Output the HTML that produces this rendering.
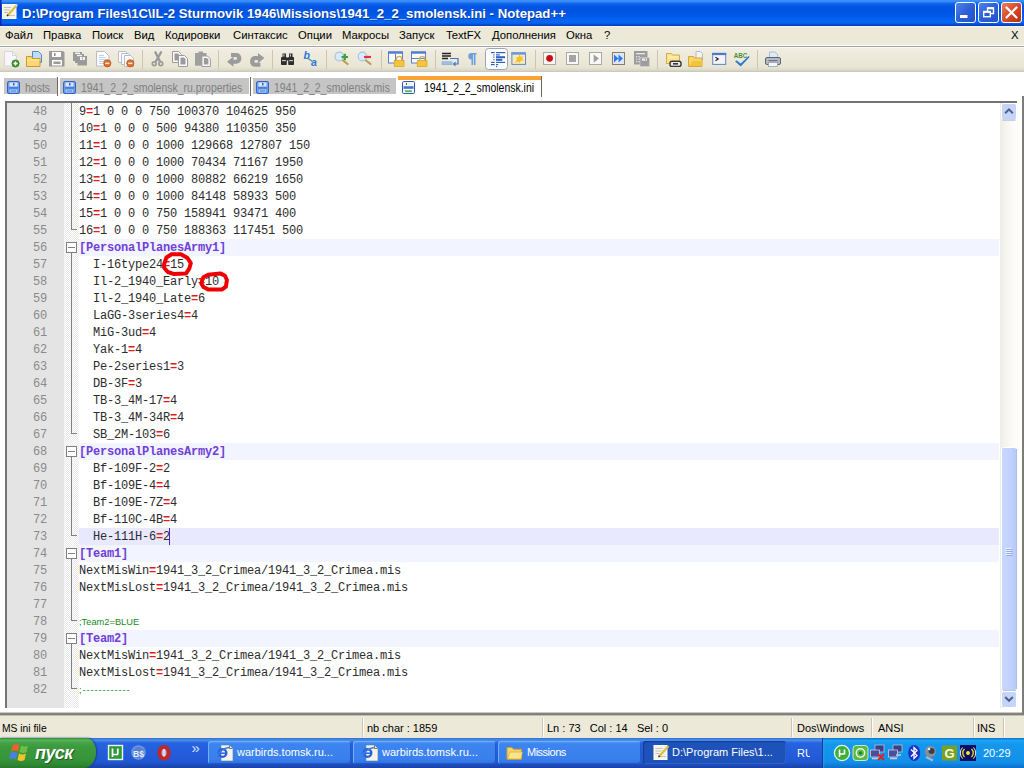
<!DOCTYPE html>
<html><head><meta charset="utf-8"><title>Notepad++</title>
<style>
*{box-sizing:border-box;margin:0;padding:0}
html,body{width:1024px;height:768px;overflow:hidden;background:#fff;font-family:"Liberation Sans",sans-serif}
.abs{position:absolute}
#title{position:absolute;left:0;top:0;width:1024px;height:26px;background:linear-gradient(to bottom,#4092fb 0,#338af8 1.5px,#1467ea 3.5px,#0457e4 6px,#0054e3 12px,#025ceb 17px,#0666f4 21px,#0563ee 23px,#0448cc 25px,#0338a6 26px)}
#title .txt{position:absolute;left:22px;top:6px;color:#fff;font-weight:bold;font-size:13.2px;white-space:nowrap;text-shadow:1px 1px 0 #0a3aa0}
.tb{position:absolute;top:2px;width:21px;height:21px;border:1px solid #fff;border-radius:3px;background:linear-gradient(135deg,#4f83ec 0,#2c5fd8 50%,#2453c8 100%)}
.tb.close{background:linear-gradient(135deg,#e8825c 0,#d8492a 50%,#b8300f 100%)}
#menu{position:absolute;left:0;top:26px;width:1024px;height:19px;background:#ece9d8;border-top:1px solid #f8f6f0}
#menu span{position:absolute;top:2px;font-size:11.3px;color:#000;white-space:nowrap}
#sep1{position:absolute;left:0;top:45px;width:1024px;height:1px;background:#fff}
#sep2{position:absolute;left:0;top:46px;width:1024px;height:1px;background:#a6a6a0}
#tool{position:absolute;left:0;top:47px;width:1024px;height:25px;background:linear-gradient(to bottom,#fdfdfb 0,#f1eee4 1.5px,#eeebde 6px,#ece9d9 13px,#e8e5d3 20px,#dcdacb 23px,#c6c5b9 25px)}
.ic{position:absolute;top:4px;width:16px;height:16px}
.vs{position:absolute;top:3px;width:1px;height:19px;background:#c5c2b2}
#tabs{position:absolute;left:0;top:72px;width:1024px;height:29px;background:#fff}
.tab{position:absolute;top:6px;height:16px;background:#c5c5c5;font-size:12px;color:#808080;white-space:nowrap}
.tab span{position:absolute;top:3px;line-height:14px;transform:scaleX(0.873);transform-origin:0 0}
.tab.act{background:#fff;color:#000;top:8px}
.tsep{position:absolute;top:5px;width:1px;height:19px;background:#6e6a5a}
#edb{position:absolute;left:5px;top:101px;width:1012px;height:607px;border-top:2px solid #747474;border-left:2px solid #747474;background:#fff}
#edbot{position:absolute;left:0;top:712px;width:1024px;height:4px;background:linear-gradient(to bottom,#f4f3ee 0,#8e8e88 30%,#6e6e6a 55%,#a8a69a 80%,#ece9d8 100%)}
.ln{position:absolute;left:7px;width:40px;height:17px;line-height:17px;text-align:right;font-family:"Liberation Mono",monospace;font-size:12px;letter-spacing:-0.2px;color:#8a8a8a;white-space:pre}
.tx{position:absolute;left:79px;height:17px;line-height:17px;font-family:"Liberation Mono",monospace;font-size:12px;letter-spacing:-0.2px;color:#2c2c2c;white-space:pre}
.tx .eq{color:#e41a1a;font-weight:bold}
.tx.sec{color:#7040d8;font-weight:bold}
.tx.com{color:#1a8a1a;font-family:"Liberation Sans",sans-serif;font-size:9.3px;letter-spacing:0}
.tx.com.d{letter-spacing:0.9px}
#status{position:absolute;left:0;top:716px;width:1024px;height:22px;background:#ece9d8;font-size:11px}
#status span{position:absolute;top:6px;white-space:nowrap}
#status i{position:absolute;top:2px;width:2px;height:19px;border-left:1px solid #c8c5b6;border-right:1px solid #fff}
#task{position:absolute;left:0;top:738px;width:1024px;height:30px;background:linear-gradient(to bottom,#3168d5 0,#4993e6 2px,#2663e0 5px,#245ddb 14px,#2157d2 24px,#1941a5 30px)}
.tbtn{position:absolute;top:3px;width:143px;height:23px;border-radius:3px;background:linear-gradient(to bottom,#5a9af5 0,#3d84f0 3px,#3a80ec 18px,#2f6fe0 23px);box-shadow:inset 1px 1px 0 #6fb0fa,inset -1px -1px 0 #2458c8;color:#fff;font-size:11px;white-space:nowrap}
.tbtn span{position:absolute;left:29px;top:5px}
.tbtn.on{background:#1e52b8;box-shadow:inset 1px 1px 1px #143a90,inset -1px -1px 0 #2d63c8}
</style></head><body>
<div id="title"><div class="txt">D:\Program Files\1C\IL-2 Sturmovik 1946\Missions\1941_2_2_smolensk.ini - Notepad++</div>
<div class="tb" style="left:955px"></div><div class="tb" style="left:978px"></div><div class="tb close" style="left:1001px"></div><svg class="abs" style="left:0;top:0" width="1024" height="26" viewBox="0 0 1024 26">
<rect x="0" y="0" width="1.500" height="26" fill="#0a28b8"/>
<rect x="2.500" y="4.500" width="13.500" height="14" fill="#f4f2ea" stroke="#fdfdf8"/>
<path d="M4 7.500h7M4 10h6M4 12.500h4M9 15.500h6" stroke="#c9c4b0" stroke-width="1"/>
<path d="M7.500 15.500L16.500 5.500" stroke="#d8c040" stroke-width="2.200"/><path d="M7 16l1.200-1.200" stroke="#333" stroke-width="1.600"/><path d="M15.800 6l1.500-1.500" stroke="#d0d0d8" stroke-width="2"/>
<rect x="960" y="15" width="7.500" height="3" fill="#fff"/>
<path d="M987.500 11v-3h6v5.500h-3" fill="none" stroke="#fff" stroke-width="1.400"/><path d="M987.200 8.300h6.600" stroke="#fff" stroke-width="2"/>
<rect x="983.700" y="11.700" width="6.600" height="5" fill="none" stroke="#fff" stroke-width="1.400"/><path d="M983.200 11.800h7.600" stroke="#fff" stroke-width="2"/>
<path d="M1006.500 7.500l10 10M1016.500 7.500l-10 10" stroke="#fff" stroke-width="2.200" stroke-linecap="round"/>
</svg>
</div>
<div id="menu"><span style="left:5px">Файл</span><span style="left:43px">Правка</span><span style="left:92px">Поиск</span><span style="left:134px">Вид</span><span style="left:165px">Кодировки</span><span style="left:233px">Синтаксис</span><span style="left:298px">Опции</span><span style="left:342px">Макросы</span><span style="left:399px">Запуск</span><span style="left:446px">TextFX</span><span style="left:492px">Дополнения</span><span style="left:566px">Окна</span><span style="left:604px">?</span><span style="left:1011px">X</span></div>
<div id="sep1"></div><div id="sep2"></div>
<div id="tool"><svg class="abs" style="left:0;top:0" width="1024" height="25" viewBox="0 47 1024 25">
<!-- separators -->
<g fill="#c9c6b6"><rect x="142" y="50" width="1" height="19"/><rect x="218" y="50" width="1" height="19"/><rect x="272" y="50" width="1" height="19"/><rect x="326" y="50" width="1" height="19"/><rect x="381" y="50" width="1" height="19"/><rect x="435" y="50" width="1" height="19"/><rect x="535" y="50" width="1" height="19"/><rect x="657" y="50" width="1" height="19"/><rect x="757" y="50" width="1" height="19"/></g>
<!-- 1 new -->
<path d="M4.5 51.5h8l4 4v10.5h-12z" fill="#f7f7f9" stroke="#d4d4dc"/><path d="M12.5 51.5v4h4" fill="none" stroke="#d4d4dc"/>
<circle cx="15.5" cy="63.5" r="3.6" fill="#3f9a2c" stroke="#2f7a22" stroke-width="0.8"/><path d="M13.5 63.5h4M15.5 61.5v4" stroke="#fff" stroke-width="1.4"/>
<!-- 2 open -->
<path d="M32.5 51.5h6l3 3v8h-9z" fill="#bcdcf8" stroke="#5a86c0"/>
<path d="M26.5 56.5h5l1 2h7.5v8h-13.5z" fill="#fbd873" stroke="#c79a2e"/><path d="M27 60h12.5" stroke="#fdeaa8" stroke-width="1"/>
<!-- 3 save (disabled) -->
<path d="M49 51h14l1.5 1.5v14h-15.5z" fill="#9a9a9a"/><rect x="52" y="52" width="9" height="5" fill="#fdfdfd"/><rect x="54" y="53" width="1.5" height="3" fill="#8a8a8a"/><rect x="52" y="60" width="10" height="5.5" fill="#fdfdfd"/><rect x="53.5" y="61.5" width="7" height="2.5" fill="#9a9a9a"/>
<!-- 4 save all (disabled) -->
<g fill="#9a9a9a"><rect x="73" y="52" width="9" height="9"/><rect x="75" y="54" width="9" height="9"/><rect x="77.5" y="56" width="9.5" height="9.5"/></g><rect x="75" y="52.6" width="5" height="1.4" fill="#f4f4f4"/><rect x="77" y="54.8" width="5" height="1.4" fill="#f4f4f4"/><rect x="80" y="57" width="5" height="3" fill="#f4f4f4"/><rect x="82" y="57.5" width="1" height="2" fill="#9a9a9a"/>
<!-- 5 close -->
<path d="M96.5 51.5h8l4.5 4.5v10h-12.5z" fill="#fdfdfe" stroke="#b9bcc8"/><path d="M99 55.500h5M99 57.500h7M99 59.500h7M99 61.500h5M99 63.500h4" stroke="#a8c0e0" stroke-width="0.700"/>
<circle cx="107.3" cy="63.3" r="3.6" fill="#e0702a" stroke="#b8561c" stroke-width="0.8"/><rect x="105.2" y="62.6" width="4.2" height="1.5" fill="#ffe9d8"/>
<!-- 6 close all -->
<path d="M118.500 51.500h7l2 2v9h-9z" fill="#fdfdfe" stroke="#b9bcc8"/><path d="M121.500 53.500h7l2 2v9h-9z" fill="#fdfdfe" stroke="#b9bcc8"/><path d="M124.500 55.500h6l3 3v8h-9z" fill="#fdfdfe" stroke="#b9bcc8"/>
<circle cx="130.300" cy="63.300" r="3.600" fill="#e0702a" stroke="#b8561c" stroke-width="0.800"/><rect x="128.200" y="62.600" width="4.200" height="1.500" fill="#ffe9d8"/>
<!-- 7 cut -->
<g stroke="#9b9b9b" fill="none"><path d="M155 51.500L160.300 62M161.500 51.500L155.500 62" stroke-width="2.400"/><circle cx="154.200" cy="63.800" r="1.900" stroke-width="1.700"/><circle cx="160.800" cy="63.800" r="1.900" stroke-width="1.700"/></g>
<!-- 8 copy -->
<path d="M172.500 51.500h6l3 3v8h-9z" fill="#fafafa" stroke="#9b9b9b"/><path d="M174.500 53.500h3.500l1.500 1.500v5.500h-5z" fill="#9b9b9b"/>
<path d="M178.500 55.500h6l3 3v8h-9z" fill="#fafafa" stroke="#9b9b9b"/><path d="M180.500 57.500h3.500l1.500 1.500v5.500h-5z" fill="#9b9b9b"/>
<!-- 9 paste -->
<path d="M195 53h3.500v-1.500h4.500v1.500h3.500v12.800h-11.500z" fill="#9f9f9f"/>
<path d="M201.900 56h5.500l3 3v7.500h-8.500z" fill="#fafafa" stroke="#9b9b9b"/><path d="M203.900 58h3l1.500 1.500v5h-4.500z" fill="#9b9b9b"/>
<!-- 10 undo -->
<path id="undo" d="M231 53H236.500A4.800 4.800 0 0 1 241.300 57.800V58.900A4.800 4.800 0 0 1 236.500 63.700H233.500V66.800L227 61.700L233.500 56.600V59.700H236A1 1 0 0 0 237 58.700V58A1 1 0 0 0 236 57H231Z" fill="#9b9b9b"/>
<!-- 11 redo -->
<use href="#undo" transform="translate(491.400,119.800) scale(-1,-1)"/>
<!-- 12 find -->
<g fill="#2e2e2e"><rect x="281" y="57" width="5.800" height="8" rx="0.800"/><rect x="288.200" y="57" width="5.800" height="8" rx="0.800"/><rect x="282.500" y="53.500" width="3.500" height="4"/><rect x="289" y="53.500" width="3.500" height="4"/><rect x="286" y="57.500" width="3" height="3"/></g><g fill="#c8c8c8"><rect x="282" y="60" width="3.800" height="1.200"/><rect x="289.200" y="60" width="3.800" height="1.200"/><rect x="283.300" y="54.300" width="1.200" height="2.200"/><rect x="289.800" y="54.300" width="1.200" height="2.200"/></g>
<!-- 13 replace -->
<text x="303.500" y="58.500" font-family="Liberation Sans,sans-serif" font-size="10.500" font-weight="bold" font-style="italic" fill="#2f74d8">b</text><text x="311" y="66" font-family="Liberation Sans,sans-serif" font-size="10.500" font-weight="bold" font-style="italic" fill="#2f74d8">a</text><path d="M307.500 58l5 3.500" stroke="#3aa0a8" stroke-width="1.400"/>
<!-- 14 zoom in -->
<path d="M343 60.500l4.500 3.500" stroke="#c09a50" stroke-width="2.200" stroke-linecap="round"/><circle cx="339.300" cy="56.500" r="4.300" fill="#dbeaf8" stroke="#a8c4e4" stroke-width="1.200"/><path d="M341.500 57h6.500M344.800 53.800v6.400" stroke="#3f9f3a" stroke-width="2.200"/>
<!-- 15 zoom out -->
<path d="M366 60.500l4.500 3.500" stroke="#c09a50" stroke-width="2.200" stroke-linecap="round"/><circle cx="362.500" cy="56.500" r="4.300" fill="#dbeaf8" stroke="#a8c4e4" stroke-width="1.200"/><path d="M364 57h7" stroke="#e0304a" stroke-width="2.200"/>
<!-- 16 sync v -->
<rect x="388.500" y="52" width="14" height="11" fill="#fbfcff" stroke="#5a80c8"/><rect x="388" y="51.500" width="15" height="2.200" fill="#4f7bd0"/><path d="M395.500 54v9" stroke="#5a80c8"/>
<path d="M396.500 60.500v-1.500a2.600 2.600 0 0 1 5.200 0v1.500" fill="none" stroke="#d8b050" stroke-width="1.400"/><rect x="394.200" y="60.300" width="9.800" height="6.300" fill="#f6c53c" stroke="#d09a20" stroke-width="0.600"/>
<!-- 17 sync h -->
<rect x="411.500" y="52" width="14" height="11" fill="#fbfcff" stroke="#5a80c8"/><rect x="411" y="51.500" width="15" height="2.200" fill="#4f7bd0"/><path d="M412 58.500h13" stroke="#5a80c8"/>
<path d="M419.500 60.500v-1.500a2.600 2.600 0 0 1 5.200 0v1.500" fill="none" stroke="#d8b050" stroke-width="1.400"/><rect x="417.200" y="60.300" width="9.800" height="6.300" fill="#f6c53c" stroke="#d09a20" stroke-width="0.600"/>
<!-- 18 wrap -->
<path d="M442 53.500h9M442 56h9M442 58.500h6" stroke="#222" stroke-width="1.300"/><rect x="442" y="61.800" width="10" height="3" fill="#9dbdea" stroke="#7aa0d8" stroke-width="0.500"/><path d="M450 58.500h8v5.500h-4" fill="none" stroke="#3f74c8" stroke-width="1.200"/><path d="M455.500 61.500l-2.800 2.500l2.800 2.500z" fill="#3f74c8"/>
<!-- 19 pilcrow -->
<path d="M471.500 65v-12h5v1.400h-1v10.600h-1.600v-10.600h-0.800v10.600z" fill="#6a9fe0"/><path d="M472.500 53h-1a3.200 3.200 0 0 0 0 6.400h1z" fill="#6a9fe0"/>
<!-- 20 indent guide (pressed) -->
<rect x="485.500" y="48.500" width="22" height="21" rx="3" fill="#fdfdfd" stroke="#98a6bc"/>
<g fill="#2f5fc0"><rect x="491" y="52" width="3.700" height="1.200"/><rect x="496" y="52" width="9.300" height="1.200"/><rect x="493.300" y="54.300" width="1.200" height="1.200"/><rect x="496" y="54.300" width="3.800" height="1.200"/><rect x="493.300" y="56.500" width="1.200" height="1.200"/><rect x="496" y="56.200" width="9" height="2"/><rect x="493.300" y="59" width="1.200" height="1.200"/><rect x="496" y="58.800" width="6.300" height="2"/><rect x="491" y="61.800" width="3.700" height="1.200"/><rect x="496" y="61.800" width="9" height="1.200"/><rect x="491" y="64" width="3.700" height="1.200"/><rect x="496" y="64" width="2.200" height="1.200"/><rect x="496" y="66" width="1.200" height="1.200"/></g>
<!-- 21 user lang -->
<rect x="511.900" y="52.800" width="13.600" height="11.600" fill="#f6ecc0" stroke="#5f88c8"/><rect x="511.400" y="52.300" width="14.600" height="2.400" fill="#6a9ae6"/><path d="M515 63l2-4.500l-2-1l3.500-0.500l1-3l1.500 3l3-1l-2 2.500l2 2l-3 0.300l-1.500 2.200l-1.500-1.500z" fill="#f5c030"/>
<!-- 22 rec -->
<rect x="543.500" y="52.500" width="12" height="12" fill="#f8f8f6" stroke="#a8a8a4"/><circle cx="549.600" cy="58.300" r="3.400" fill="#cc0a10"/>
<!-- 23 stop -->
<rect x="566.500" y="52.500" width="12" height="12" fill="#f8f8f6" stroke="#a8a8a4"/><rect x="569" y="55" width="7" height="7" fill="#a4a4a4"/>
<!-- 24 play -->
<rect x="589.500" y="52.500" width="12" height="12" fill="#f8f8f6" stroke="#a8a8a4"/><path d="M593.700 54.400l5.300 4.200l-5.300 4.200z" fill="#a0a0a0"/>
<!-- 25 ff -->
<rect x="612.500" y="52.500" width="12" height="12" fill="#dce8fa" stroke="#8a7c70"/><path d="M614 54.500l4.500 4l-4.500 4zM618.500 54.500l4.500 4l-4.500 4z" fill="#3478e4"/>
<!-- 26 save macro (disabled) -->
<rect x="634" y="51" width="13.500" height="13.500" fill="#9c9c9c"/><rect x="636" y="53" width="9" height="1.300" fill="#e8e8e8"/><g fill="#e8e8e8"><rect x="636" y="56" width="1.300" height="1.300"/><rect x="638.500" y="56" width="1.300" height="1.300"/><rect x="636" y="58.500" width="1.300" height="1.300"/><rect x="638.500" y="58.500" width="1.300" height="1.300"/><rect x="636" y="61" width="1.300" height="1.300"/><rect x="638.500" y="61" width="1.300" height="1.300"/></g><rect x="640" y="57.600" width="9.600" height="9" fill="#9c9c9c" stroke="#e4e4e4" stroke-width="0.500"/><rect x="642" y="58.400" width="5" height="2.300" fill="#eeeeee"/><rect x="645" y="58.600" width="1" height="1.600" fill="#9c9c9c"/>
<!-- 27 folder chain -->
<path d="M666.500 53.500h5l1 1.500h7v8.500h-13z" fill="#fbe394" stroke="#d2ac48"/><path d="M668 57h10" stroke="#fff2c0"/><rect x="670" y="61.200" width="11" height="5.200" rx="2" fill="#e8e8e8" stroke="#383838" stroke-width="1.400"/><rect x="673" y="63" width="5" height="1.600" fill="#383838"/>
<!-- 28 folder page -->
<path d="M696 51.500h4.500l2 2v6.500h-6.500z" fill="#f2f2f4" stroke="#b8b8c0"/><path d="M688.500 56.500h5l1 1.500h7.500v8.500h-13.500z" fill="#f9d468" stroke="#d2a838"/><path d="M689 66l4-5h9v5z" fill="#f5c23c"/>
<!-- 29 cmd -->
<rect x="712.700" y="53.400" width="13" height="11" fill="#f3f3fa" stroke="#6484c4"/><rect x="712.200" y="52.900" width="14" height="2.200" fill="#4f78c8"/><path d="M715.500 57.200l2.800 1.800l-2.800 1.800" fill="none" stroke="#222" stroke-width="1.100"/>
<!-- 30 ABC -->
<text x="733.800" y="57.800" font-family="Liberation Sans,sans-serif" font-size="6.400" font-weight="bold" fill="#4d8c34" textLength="13.500" lengthAdjust="spacingAndGlyphs">ABC</text><path d="M736.400 60.300l4.300 3.200l8-7.500l1 1l-9 9.500l-5.500-5z" fill="#2a7bd4"/>
<!-- 31 print -->
<path d="M769.500 58v-6h5.500l2.500 2.500v3.500z" fill="#dcebfb" stroke="#9ab4d8" stroke-width="0.800"/><rect x="765.500" y="57.500" width="15" height="7" rx="1.500" fill="#b4bac2" stroke="#5e646e"/><rect x="768.500" y="60" width="9" height="1.200" fill="#70767e"/><rect x="768.500" y="62.500" width="9" height="4" fill="#f4f8fc" stroke="#8a98b0" stroke-width="0.700"/>
<!--MORE-->
</svg>
</div>
<div id="tabs"><svg width="0" height="0" style="position:absolute"><defs>
<g id="flop"><rect x="0.5" y="0.5" width="12" height="12" rx="1.5" fill="#6f9eec" stroke="#3565c4"/><rect x="2.5" y="1.5" width="8" height="4" fill="#d9e6fb"/><rect x="6" y="2" width="1.5" height="2.5" fill="#2f62c4"/><rect x="2" y="6.2" width="9" height="1.4" fill="#3f74d6"/><rect x="3" y="8.5" width="7" height="3" fill="#a9c6f5"/><rect x="4" y="9.5" width="5" height="1" fill="#4a86c8"/></g>
<g id="flopw"><rect x="0.5" y="0.5" width="12" height="12" rx="1.2" fill="#f6f9fe" stroke="#2f5aa8"/><rect x="4" y="2" width="1" height="2" fill="#3a6a3a"/><rect x="5.500" y="2" width="3" height="2" fill="#e4f0d8"/><rect x="1.500" y="5.200" width="10" height="2.600" fill="#4a72d8"/><rect x="3" y="9.300" width="7" height="1.800" fill="#5fb84a"/></g>
</defs></svg>
<div class="tab" style="left:4px;width:53px"><svg class="abs" style="left:3px;top:3px" width="13" height="13"><use href="#flop"/></svg><span style="left:21px">hosts</span></div>
<div class="tsep" style="left:57px"></div>
<div class="tab" style="left:60px;width:189px"><svg class="abs" style="left:3px;top:3px" width="13" height="13"><use href="#flop"/></svg><span style="left:21px">1941_2_2_smolensk_ru.properties</span></div>
<div class="tsep" style="left:250px"></div>
<div class="tab" style="left:253px;width:143px"><svg class="abs" style="left:3px;top:3px" width="13" height="13"><use href="#flop"/></svg><span style="left:21px">1941_2_2_smolensk.mis</span></div>
<div class="abs" style="left:398px;top:4px;width:143px;height:4px;background:#faa334"></div>
<div class="tab act" style="left:398px;width:143px"><svg class="abs" style="left:4px;top:1px" width="13" height="13"><use href="#flopw"/></svg><span style="left:26px;top:1px">1941_2_2_smolensk.ini</span></div>
<div class="tsep" style="left:541px;top:4px;height:21px"></div>
</div>
<div id="edb"></div><div id="edbot"></div>
<div class="abs" style="left:7px;top:103px;width:57px;height:605px;background:#e4e4e4"></div>
<div class="abs" style="left:64px;top:103px;width:15px;height:605px;background:repeating-conic-gradient(#fff 0 25%,#e9e9e9 0 50%) 0 0/2px 2px"></div>
<div class="ln" style="top:104px">48</div>
<div class="tx" style="top:104px">9<b class="eq">=</b>1 0 0 0 750 100370 104625 950</div>
<div class="ln" style="top:121px">49</div>
<div class="tx" style="top:121px">10<b class="eq">=</b>1 0 0 0 500 94380 110350 350</div>
<div class="ln" style="top:138px">50</div>
<div class="tx" style="top:138px">11<b class="eq">=</b>1 0 0 0 1000 129668 127807 150</div>
<div class="ln" style="top:155px">51</div>
<div class="tx" style="top:155px">12<b class="eq">=</b>1 0 0 0 1000 70434 71167 1950</div>
<div class="ln" style="top:172px">52</div>
<div class="tx" style="top:172px">13<b class="eq">=</b>1 0 0 0 1000 80882 66219 1650</div>
<div class="ln" style="top:189px">53</div>
<div class="tx" style="top:189px">14<b class="eq">=</b>1 0 0 0 1000 84148 58933 500</div>
<div class="ln" style="top:206px">54</div>
<div class="tx" style="top:206px">15<b class="eq">=</b>1 0 0 0 750 158941 93471 400</div>
<div class="ln" style="top:223px">55</div>
<div class="tx" style="top:223px">16<b class="eq">=</b>1 0 0 0 750 188363 117451 500</div>
<div class="abs" style="left:79px;top:239px;width:920px;height:17px;background:#f2f4ff"></div>
<div class="ln" style="top:240px">56</div>
<div class="tx sec" style="top:240px">[PersonalPlanesArmy1]</div>
<div class="ln" style="top:257px">57</div>
<div class="tx" style="top:257px">&nbsp;&nbsp;I-16type24<b class="eq">=</b>15</div>
<div class="ln" style="top:274px">58</div>
<div class="tx" style="top:274px">&nbsp;&nbsp;Il-2_1940_Early<b class="eq">=</b>10</div>
<div class="ln" style="top:291px">59</div>
<div class="tx" style="top:291px">&nbsp;&nbsp;Il-2_1940_Late<b class="eq">=</b>6</div>
<div class="ln" style="top:308px">60</div>
<div class="tx" style="top:308px">&nbsp;&nbsp;LaGG-3series4<b class="eq">=</b>4</div>
<div class="ln" style="top:325px">61</div>
<div class="tx" style="top:325px">&nbsp;&nbsp;MiG-3ud<b class="eq">=</b>4</div>
<div class="ln" style="top:342px">62</div>
<div class="tx" style="top:342px">&nbsp;&nbsp;Yak-1<b class="eq">=</b>4</div>
<div class="ln" style="top:359px">63</div>
<div class="tx" style="top:359px">&nbsp;&nbsp;Pe-2series1<b class="eq">=</b>3</div>
<div class="ln" style="top:376px">64</div>
<div class="tx" style="top:376px">&nbsp;&nbsp;DB-3F<b class="eq">=</b>3</div>
<div class="ln" style="top:393px">65</div>
<div class="tx" style="top:393px">&nbsp;&nbsp;TB-3_4M-17<b class="eq">=</b>4</div>
<div class="ln" style="top:410px">66</div>
<div class="tx" style="top:410px">&nbsp;&nbsp;TB-3_4M-34R<b class="eq">=</b>4</div>
<div class="ln" style="top:427px">67</div>
<div class="tx" style="top:427px">&nbsp;&nbsp;SB_2M-103<b class="eq">=</b>6</div>
<div class="abs" style="left:79px;top:443px;width:920px;height:17px;background:#f2f4ff"></div>
<div class="ln" style="top:444px">68</div>
<div class="tx sec" style="top:444px">[PersonalPlanesArmy2]</div>
<div class="ln" style="top:461px">69</div>
<div class="tx" style="top:461px">&nbsp;&nbsp;Bf-109F-2<b class="eq">=</b>2</div>
<div class="ln" style="top:478px">70</div>
<div class="tx" style="top:478px">&nbsp;&nbsp;Bf-109E-4<b class="eq">=</b>4</div>
<div class="ln" style="top:495px">71</div>
<div class="tx" style="top:495px">&nbsp;&nbsp;Bf-109E-7Z<b class="eq">=</b>4</div>
<div class="ln" style="top:512px">72</div>
<div class="tx" style="top:512px">&nbsp;&nbsp;Bf-110C-4B<b class="eq">=</b>4</div>
<div class="abs" style="left:79px;top:528px;width:920px;height:17px;background:#e8e8ff"></div>
<div class="ln" style="top:529px">73</div>
<div class="tx" style="top:529px">&nbsp;&nbsp;He-111H-6<b class="eq">=</b>2</div>
<div class="abs" style="left:79px;top:545px;width:920px;height:17px;background:#f2f4ff"></div>
<div class="ln" style="top:546px">74</div>
<div class="tx sec" style="top:546px">[Team1]</div>
<div class="ln" style="top:563px">75</div>
<div class="tx" style="top:563px">NextMisWin<b class="eq">=</b>1941_3_2_Crimea/1941_3_2_Crimea.mis</div>
<div class="ln" style="top:580px">76</div>
<div class="tx" style="top:580px">NextMisLost<b class="eq">=</b>1941_3_2_Crimea/1941_3_2_Crimea.mis</div>
<div class="ln" style="top:597px">77</div>
<div class="tx" style="top:597px"></div>
<div class="ln" style="top:614px">78</div>
<div class="tx com" style="top:614px">;Team2=BLUE</div>
<div class="abs" style="left:79px;top:630px;width:920px;height:17px;background:#f2f4ff"></div>
<div class="ln" style="top:631px">79</div>
<div class="tx sec" style="top:631px">[Team2]</div>
<div class="ln" style="top:648px">80</div>
<div class="tx" style="top:648px">NextMisWin<b class="eq">=</b>1941_3_2_Crimea/1941_3_2_Crimea.mis</div>
<div class="ln" style="top:665px">81</div>
<div class="tx" style="top:665px">NextMisLost<b class="eq">=</b>1941_3_2_Crimea/1941_3_2_Crimea.mis</div>
<div class="ln" style="top:682px">82</div>
<div class="tx com d" style="top:682px">;------------</div>
<div class="abs" style="left:71px;top:103px;width:1px;height:127px;background:#808080"></div>
<div class="abs" style="left:71px;top:229px;width:6px;height:1px;background:#808080"></div>
<div class="abs" style="left:71px;top:253px;width:1px;height:181px;background:#808080"></div>
<div class="abs" style="left:71px;top:433px;width:6px;height:1px;background:#808080"></div>
<div class="abs" style="left:66px;top:242px;width:11px;height:11px;border:1px solid #808080;background:#fff"></div><div class="abs" style="left:68px;top:247px;width:7px;height:1px;background:#808080"></div>
<div class="abs" style="left:71px;top:457px;width:1px;height:79px;background:#808080"></div>
<div class="abs" style="left:71px;top:535px;width:6px;height:1px;background:#808080"></div>
<div class="abs" style="left:66px;top:446px;width:11px;height:11px;border:1px solid #808080;background:#fff"></div><div class="abs" style="left:68px;top:451px;width:7px;height:1px;background:#808080"></div>
<div class="abs" style="left:71px;top:559px;width:1px;height:62px;background:#808080"></div>
<div class="abs" style="left:71px;top:620px;width:6px;height:1px;background:#808080"></div>
<div class="abs" style="left:66px;top:548px;width:11px;height:11px;border:1px solid #808080;background:#fff"></div><div class="abs" style="left:68px;top:553px;width:7px;height:1px;background:#808080"></div>
<div class="abs" style="left:71px;top:644px;width:1px;height:45px;background:#808080"></div>
<div class="abs" style="left:71px;top:688px;width:6px;height:1px;background:#808080"></div>
<div class="abs" style="left:66px;top:633px;width:11px;height:11px;border:1px solid #808080;background:#fff"></div><div class="abs" style="left:68px;top:638px;width:7px;height:1px;background:#808080"></div>
<div class="abs" style="left:169px;top:528px;width:1px;height:17px;background:#5a20d0"></div>
<svg class="abs" style="left:0;top:0" width="1024" height="768" viewBox="0 0 1024 768"><g fill="none" stroke="#ee0000" stroke-width="4" stroke-linejoin="round" stroke-linecap="round">
<path d="M164.1 264.1 L166.4 257.5 L171.6 254.2 L180.9 254.2 L187.5 258 L190.8 263.1 L189.4 268.3 L186.1 273.4 L173.4 273.9 L167.8 272 L164.1 267.8 Z"/>
<path d="M202 280.9 L203.4 277.2 L208.1 274.8 L220.3 273.4 L225 275.8 L226.9 280 L225.9 286.6 L222.2 289.4 L208.1 289.4 L203.4 287 L201.5 283.7 Z"/>
</g></svg>
<svg class="abs" style="left:0;top:0" width="1024" height="768" viewBox="0 0 1024 768">
<defs><linearGradient id="trk" x1="0" y1="0" x2="1" y2="0"><stop offset="0" stop-color="#eeede5"/><stop offset="0.5" stop-color="#f8f7f3"/><stop offset="1" stop-color="#fefefc"/></linearGradient>
<linearGradient id="thm" x1="0" y1="0" x2="1" y2="0"><stop offset="0" stop-color="#c9d7fd"/><stop offset="0.6" stop-color="#c1d2fd"/><stop offset="1" stop-color="#b6c8f4"/></linearGradient></defs>
<rect x="1000" y="103" width="17" height="605" fill="url(#trk)"/>
<rect x="1001.5" y="103.500" width="15" height="16" rx="2" fill="#c5d5fa" stroke="#fff"/><path d="M1002.500 120h13" stroke="#98a8c8" stroke-width="1"/>
<path d="M1005.200 113.200l3.800-3.800l3.800 3.800" fill="none" stroke="#4d6185" stroke-width="2"/>
<rect x="1001.500" y="447.500" width="15" height="243" rx="2" fill="url(#thm)" stroke="#fff"/><path d="M1016.500 449v240" stroke="#98aee0" stroke-width="0.800"/><path d="M1003 690.700h13" stroke="#8fa4d4" stroke-width="0.800"/>
<path d="M1005.500 548.500h6M1005.500 550.500h6M1005.500 552.500h6M1005.500 554.500h6" stroke="#eef4fe" stroke-width="1"/><path d="M1006.500 549.500h6M1006.500 551.500h6M1006.500 553.500h6M1006.500 555.500h6" stroke="#8ca8e8" stroke-width="1"/>
<rect x="1001.500" y="691.500" width="15" height="16" rx="2" fill="#c5d5fa" stroke="#fff"/>
<path d="M1005.200 697l3.800 3.800l3.800-3.800" fill="none" stroke="#4d6185" stroke-width="2"/>
<rect x="1022" y="96" width="2" height="619" fill="#7c7c78"/>
</svg>
<div id="status"><span style="left:2px;font-size:10.3px;top:7px">MS ini file</span><span style="left:367px">nb char : 1859</span><span style="left:547px">Ln : 73&nbsp;&nbsp;&nbsp;Col : 14&nbsp;&nbsp;&nbsp;Sel : 0</span><span style="left:797px">Dos\Windows</span><span style="left:878px">ANSI</span><span style="left:977px">INS</span><i style="left:362px"></i><i style="left:542px"></i><i style="left:791px"></i><i style="left:871px"></i><i style="left:973px"></i><i style="left:1003px"></i></div>
<div id="task"><div class="abs" style="left:0;top:0;width:96px;height:30px;border-radius:0 10px 12px 0/0 14px 16px 0;background:linear-gradient(to bottom,#2f8a33 0,#58b45a 2px,#43a346 5px,#3a9a3d 9px,#37963a 20px,#2f8a33 26px,#27782b 30px);box-shadow:1px 0 2px #163f8c"></div>
<div class="abs" style="left:35px;top:5px;color:#fff;font-weight:bold;font-style:italic;font-size:18px;line-height:20px;letter-spacing:-0.6px;text-shadow:1px 1px 1px #1c5a20">пуск</div>
<svg class="abs" style="left:0;top:0" width="1024" height="30" viewBox="0 738 1024 30">
<!-- flag -->
<path d="M12.500 745q3.500-2 7 0l-1.500 6.500q-3.500-2-7 0z" fill="#e8622c"/><path d="M21 745.500q3.500 2 7 0l-1.500 6.500q-3.500 2-7 0z" fill="#6cc047"/><path d="M10.500 753q3.500-2 7 0l-1.500 6.500q-3.500-2-7 0z" fill="#4c7fe0"/><path d="M19 753.500q3.500 2 7 0l-1.500 6.500q-3.500 2-7 0z" fill="#f5c22c"/>
<!-- quick launch -->
<rect x="108.500" y="745.500" width="14" height="14" fill="#2f9a3a" stroke="#eef6ee" stroke-width="1.400"/><path d="M112.500 748.500v8.500M112.500 754.500h5.500M117.800 748.500v6" stroke="#fff" stroke-width="1.700" fill="none"/>
<circle cx="138.500" cy="752.500" r="7.300" fill="#6f95e0"/><circle cx="138.500" cy="752.500" r="5.800" fill="#5580d4"/><text x="133" y="756.500" font-family="Liberation Sans,sans-serif" font-weight="bold" font-size="9.500" fill="#e8eefc" textLength="11" lengthAdjust="spacingAndGlyphs">B$</text>
<ellipse cx="164" cy="752.800" rx="4.600" ry="5.800" fill="#a8a4c8" stroke="#c42626" stroke-width="4"/><ellipse cx="164" cy="752.800" rx="1.500" ry="4" fill="#d8d8ec"/>
<text x="191.500" y="752.500" font-family="Liberation Sans,sans-serif" font-size="15" fill="#d4e2fc">»</text>
<!-- tray -->
<defs><linearGradient id="tray" x1="0" y1="0" x2="0" y2="1"><stop offset="0" stop-color="#0c6fc8"/><stop offset="0.080" stop-color="#1ba6f4"/><stop offset="0.200" stop-color="#1597ee"/><stop offset="0.800" stop-color="#1290e8"/><stop offset="1" stop-color="#0d6ecc"/></linearGradient></defs>
<rect x="823" y="738" width="201" height="30" fill="url(#tray)"/><rect x="822" y="738" width="1.200" height="30" fill="#0a3f9a"/><rect x="823.200" y="739" width="1" height="29" fill="#3cb8f8" opacity="0.600"/>
<circle cx="842" cy="753" r="7.600" fill="#3fae3a" stroke="#e8f6e4" stroke-width="1.300"/><path d="M839.500 749.500v7.500M839.500 754h4.500M844.500 749.500v5" stroke="#fff" stroke-width="1.600" fill="none"/>
<rect x="853" y="745.500" width="15" height="15" rx="3" fill="#58b848" stroke="#cfe8c4" stroke-width="1"/><circle cx="860.500" cy="753" r="4.200" fill="none" stroke="#e8f8e0" stroke-width="1.500"/><circle cx="860.500" cy="753" r="1.600" fill="#2a7a28"/>
<g><rect x="875" y="745" width="9" height="7" fill="#3a3f88" stroke="#b8c0d8" stroke-width="0.800"/><rect x="870.500" y="750" width="9" height="7" fill="#4a4f98" stroke="#c8d0e4" stroke-width="0.800"/><path d="M872 758.500h7" stroke="#c8ccd8" stroke-width="1.600"/><path d="M878 754l6 6M884 754l-6 6" stroke="#e02020" stroke-width="1.800"/></g>
<g><rect x="893" y="745" width="9" height="7" fill="#3a3f88" stroke="#b8c0d8" stroke-width="0.800"/><rect x="888.500" y="750" width="9" height="7" fill="#4a4f98" stroke="#c8d0e4" stroke-width="0.800"/><path d="M890 758.500h7M896 755h5" stroke="#c8ccd8" stroke-width="1.600"/></g>
<ellipse cx="914.200" cy="753" rx="6" ry="8" fill="#1a32c8"/><path d="M911 749.500l6 6l-3 3v-11l3 3l-6 6" fill="none" stroke="#fff" stroke-width="1.300"/>
<circle cx="930.500" cy="751.500" r="5.500" fill="#8a8e96"/><circle cx="931.500" cy="751" r="3" fill="#3a3e46"/><path d="M926 757l7 3.500" stroke="#b0b4c0" stroke-width="2.200"/><circle cx="929" cy="749" r="1.300" fill="#e8e8f0"/>
<rect x="942" y="745.500" width="15" height="15" fill="#7aa020"/><text x="944.500" y="758" font-family="Liberation Sans,sans-serif" font-size="13" font-weight="bold" fill="#f4f8e8">G</text>
<rect x="960" y="745" width="16" height="16" fill="#0a1060"/><circle cx="968" cy="753" r="2" fill="#f8e040"/><path d="M964.500 749a5.500 5.500 0 0 0 0 8M971.500 749a5.500 5.500 0 0 1 0 8" fill="none" stroke="#f8e040" stroke-width="1.300"/><path d="M962.500 747.500a8 8 0 0 0 0 11M973.500 747.500a8 8 0 0 1 0 11" fill="none" stroke="#f8f4d0" stroke-width="1"/>
</svg>
<div class="tbtn" style="left:208px"><span>warbirds.tomsk.ru...</span></div>
<div class="tbtn" style="left:353px"><span>warbirds.tomsk.ru...</span></div>
<div class="tbtn" style="left:498px"><span style="letter-spacing:-0.5px">Missions</span></div>
<div class="tbtn on" style="left:643px"><span>D:\Program Files\1...</span></div>
<svg class="abs" style="left:0;top:0" width="1024" height="30" viewBox="0 738 1024 30">
<g id="ie1"><path d="M221.500 745.500h8l3 3v12h-11z" fill="#f6f4e6" stroke="#d8d4c0" stroke-width="0.800"/><path d="M229.500 745.500v3h3" fill="none" stroke="#555" stroke-width="0.800"/><circle cx="222.500" cy="753" r="3.800" fill="none" stroke="#2460d8" stroke-width="2.300"/><path d="M219 753.200h7.500" stroke="#2460d8" stroke-width="1.500"/><path d="M216.500 757.500q4-9 12.500-10" fill="none" stroke="#3f7ce8" stroke-width="1.400"/></g>
<use href="#ie1" x="145"/>
<path d="M507 747.500h5l1.500 1.800h8v10h-14.500z" fill="#f6d568" stroke="#c8a030"/><path d="M507.500 759l2.500-7h12.500l-1.500 7z" fill="#fbe48c" stroke="#c8a030" stroke-width="0.600"/>
<rect x="654" y="745.500" width="13" height="14" fill="#f4f2ea" stroke="#fdfdf8"/><path d="M655.500 748.500h7M655.500 751h6M655.500 753.500h4M660 756.500h6" stroke="#c9c4b0"/><path d="M659 756.500L668.500 746" stroke="#d8c040" stroke-width="2.200"/><path d="M658.500 757l1.200-1.200" stroke="#333" stroke-width="1.600"/>
</svg>
<div class="abs" style="left:797px;top:9px;color:#fff;font-size:11px;width:13px;overflow:hidden;white-space:nowrap">RU</div>
<div class="abs" style="left:983px;top:9px;color:#fff;font-size:11px;white-space:nowrap">20:29</div>
</div>
</body></html>
